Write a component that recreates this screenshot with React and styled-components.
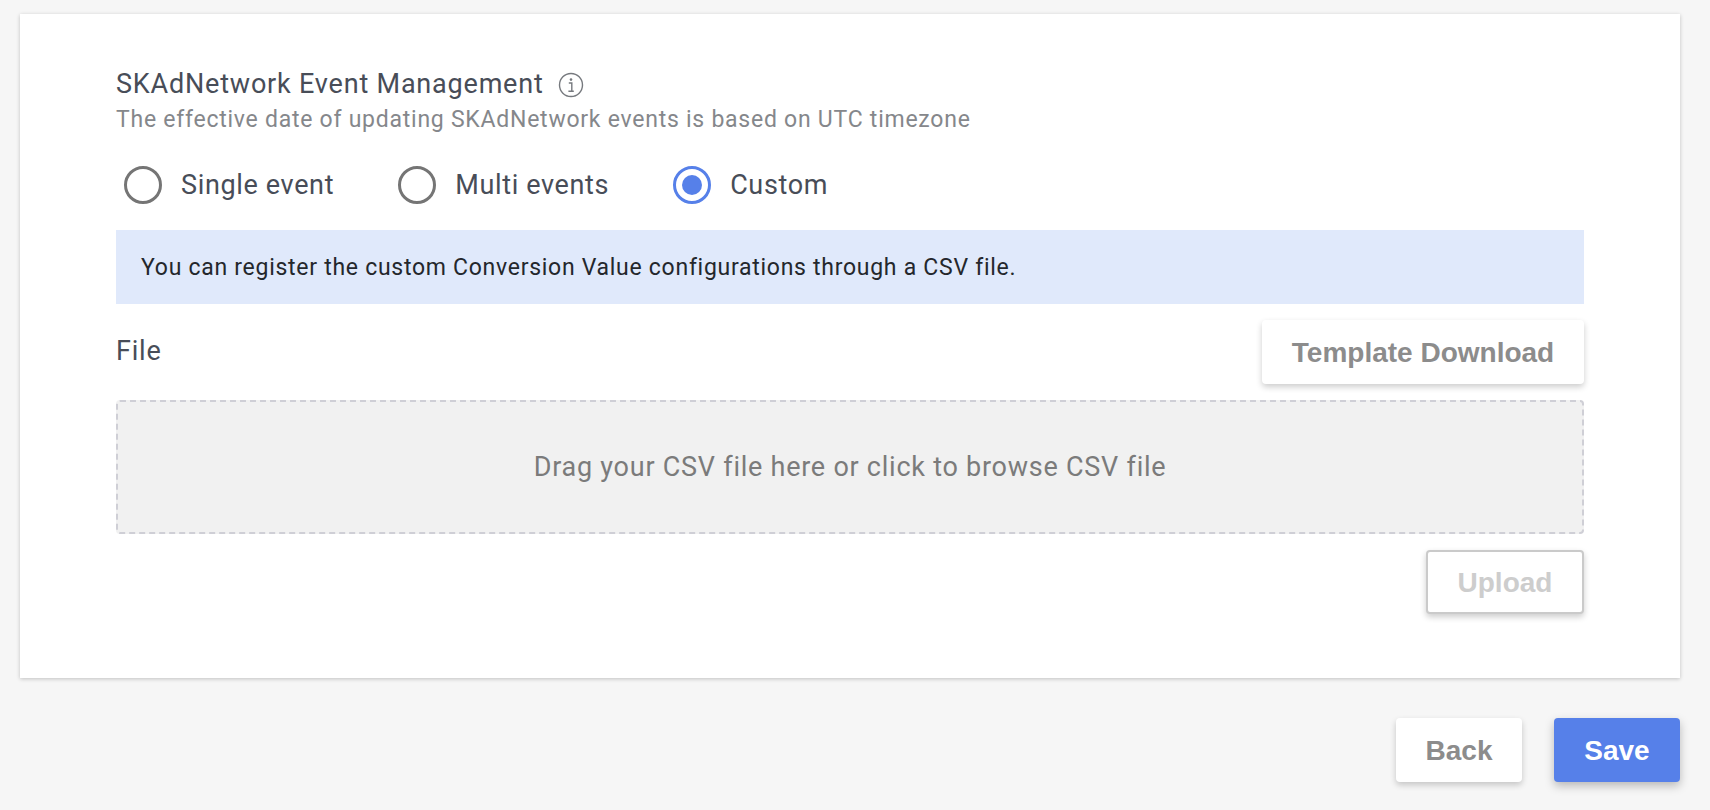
import React from "react"
import styled, { createGlobalStyle } from "styled-components"

const GlobalStyle = createGlobalStyle`
  html, body {
    margin: 0;
    padding: 0;
    background: #f6f6f6;
    font-family: Roboto, "Liberation Sans", sans-serif;
  }
  * {
    box-sizing: border-box;
  }
`

const Page = styled.div`
  width: 1710px;
  height: 810px;
  padding: 14px 30px 0 20px;
  overflow: hidden;
`

const Card = styled.section`
  height: 664px;
  padding: 54px 96px 0;
  background: #fff;
  box-shadow: 0 1px 4px rgba(0, 0, 0, 0.22);
`

const TitleRow = styled.div`
  display: flex;
  align-items: center;
  gap: 14px;
  height: 32px;
`

const Title = styled.h2`
  margin: 0;
  font-size: 27px;
  font-weight: 400;
  letter-spacing: 0.8px;
  line-height: 32px;
  color: #484d58;
`

const InfoIcon = styled.svg`
  width: 26px;
  height: 26px;
  margin-top: 2px;
  color: #76797e;
`

const Subtitle = styled.p`
  margin: 5px 0 0;
  height: 30px;
  font-size: 23px;
  letter-spacing: 0.75px;
  line-height: 30px;
  color: #85878b;
`

const RadioGroup = styled.div`
  display: flex;
  align-items: center;
  gap: 64px;
  height: 42px;
  margin-top: 29px;
  padding-left: 8px;
`

const RadioItem = styled.label`
  display: flex;
  align-items: center;
  gap: 19px;
  font-size: 27px;
  letter-spacing: 0.65px;
  color: #484d58;
`

const RadioCircle = styled.span`
  display: flex;
  align-items: center;
  justify-content: center;
  width: 38px;
  height: 38px;
  border-radius: 50%;
  border: 3px solid ${props => (props.$checked ? "#5680e9" : "#757575")};

  &::after {
    content: "";
    display: ${props => (props.$checked ? "block" : "none")};
    width: 20px;
    height: 20px;
    border-radius: 50%;
    background: #5680e9;
  }
`

const Notice = styled.div`
  display: flex;
  align-items: center;
  height: 74px;
  margin-top: 24px;
  padding-left: 25px;
  background: #e0e9fb;
  font-size: 23px;
  letter-spacing: 0.72px;
  color: #24272c;
`

const FileRow = styled.div`
  display: flex;
  align-items: center;
  justify-content: space-between;
  margin-top: 16px;
`

const FileLabel = styled.span`
  margin-top: -2px;
  font-size: 27px;
  letter-spacing: 0.8px;
  color: #484d58;
`

const Button = styled.button`
  height: 64px;
  width: ${props => props.$width}px;
  padding: 2px 0 0;
  border: none;
  border-radius: 4px;
  background: ${props => (props.$primary ? "#5680e9" : "#fff")};
  color: ${props => (props.$primary ? "#fff" : "#8c8c8c")};
  font-family: "Liberation Sans", Arial, sans-serif;
  font-size: 28px;
  font-weight: 700;
  box-shadow: ${props =>
    props.$primary ? "0 4px 10px rgba(0, 0, 0, 0.25)" : "0 3px 6px rgba(0, 0, 0, 0.2)"};
`

const UploadButton = styled(Button)`
  border: 2px solid #cacaca;
  color: #cdcdcd;
`

const DropZone = styled.div`
  display: flex;
  align-items: center;
  justify-content: center;
  height: 134px;
  margin-top: 16px;
  border: 2px dashed #cfcfd6;
  border-radius: 4px;
  background: #f1f1f1;
  font-size: 27px;
  letter-spacing: 0.75px;
  color: #7b7b7b;
`

const UploadRow = styled.div`
  display: flex;
  justify-content: flex-end;
  margin-top: 16px;
`

const Footer = styled.footer`
  display: flex;
  justify-content: flex-end;
  gap: 32px;
  margin-top: 40px;
`

const App = () => (
  <>
    <GlobalStyle />
    <Page>
      <Card>
        <TitleRow>
          <Title>SKAdNetwork Event Management</Title>
          <InfoIcon viewBox="0 0 26 26" fill="none">
            <circle cx="13" cy="13" r="11.5" stroke="currentColor" strokeWidth="1.4" />
            <circle cx="13" cy="7.6" r="1.3" fill="currentColor" />
            <path d="M10.8 11h3v8M10.4 19.2h5.4" stroke="currentColor" strokeWidth="1.4" />
          </InfoIcon>
        </TitleRow>
        <Subtitle>The effective date of updating SKAdNetwork events is based on UTC timezone</Subtitle>
        <RadioGroup>
          <RadioItem>
            <RadioCircle />
            Single event
          </RadioItem>
          <RadioItem>
            <RadioCircle />
            Multi events
          </RadioItem>
          <RadioItem>
            <RadioCircle $checked />
            Custom
          </RadioItem>
        </RadioGroup>
        <Notice>You can register the custom Conversion Value configurations through a CSV file.</Notice>
        <FileRow>
          <FileLabel>File</FileLabel>
          <Button $width={322}>Template Download</Button>
        </FileRow>
        <DropZone>Drag your CSV file here or click to browse CSV file</DropZone>
        <UploadRow>
          <UploadButton $width={158}>Upload</UploadButton>
        </UploadRow>
      </Card>
      <Footer>
        <Button $width={126}>Back</Button>
        <Button $width={126} $primary>Save</Button>
      </Footer>
    </Page>
  </>
)

export default App
